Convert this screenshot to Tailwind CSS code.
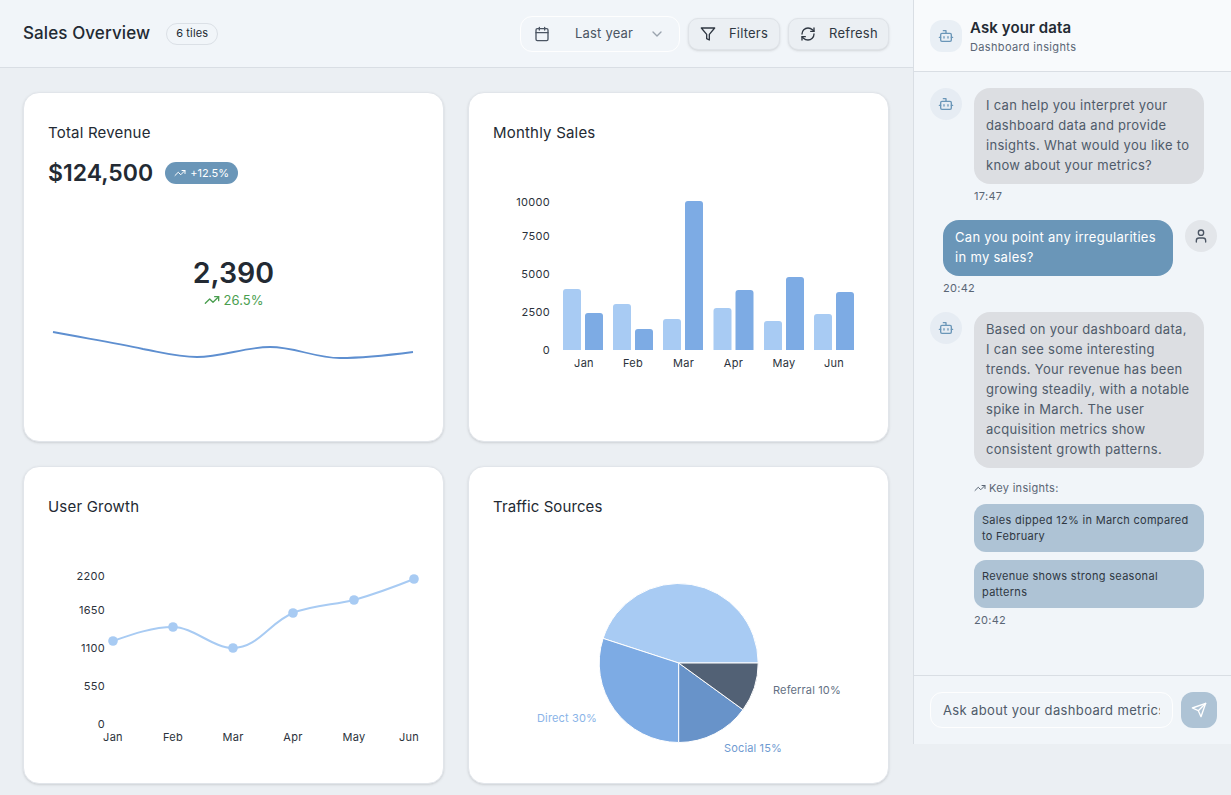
<!DOCTYPE html>
<html lang="en">
<head>
    <meta charset="UTF-8">
    <meta name="viewport" content="width=device-width, initial-scale=1.0">
    <title>Sales Overview</title>
    <script src="https://cdn.jsdelivr.net/npm/@tailwindcss/browser@4"></script>
</head>
<body class="bg-[#ebeff3] font-['Inter',sans-serif] text-[#232a33] overflow-hidden">
    <div class="flex h-[795px] w-[1231px] items-start">
        <!-- Main Content -->
        <div class="w-[913px] shrink-0">
            <div class="h-[68px] bg-[#f1f5f9] border-b border-[#d9dee4] flex items-center pl-[23px] pr-[24px]">
                <h1 class="text-[17px] font-medium tracking-[0.1px]">Sales Overview</h1>
                <span class="ml-4 h-[22px] px-[9px] flex items-center rounded-full border border-[#dbe0e6] text-[11px] tracking-[0.15px]">6 tiles</span>
                <div class="ml-auto flex items-center gap-2">
                    <div class="w-[160px] h-9 rounded-xl border border-white/90 flex items-center pl-[13px] pr-[14px] text-[13px] text-[#4b5563] tracking-[0.2px]">
                        <svg class="w-4 h-4 text-[#4b5563]" viewBox="0 0 24 24" fill="none" stroke="currentColor" stroke-width="2" stroke-linecap="round" stroke-linejoin="round"><path d="M8 2v4M16 2v4"/><rect x="3" y="4" width="18" height="18" rx="2"/><path d="M3 10h18"/></svg>
                        <span class="ml-[25px]">Last year</span>
                        <svg class="ml-auto w-4 h-4 text-[#9aa3ae]" viewBox="0 0 24 24" fill="none" stroke="currentColor" stroke-width="2" stroke-linecap="round" stroke-linejoin="round"><path d="m6 9 6 6 6-6"/></svg>
                    </div>
                    <button class="w-[92px] h-8 rounded-[10px] bg-[#ebeff3] border border-[#dfe3e8] shadow-sm flex items-center pl-[11px] text-[13px] text-[#2f3742] tracking-[0.2px]">
                        <svg class="w-4 h-4" viewBox="0 0 24 24" fill="none" stroke="currentColor" stroke-width="2" stroke-linecap="round" stroke-linejoin="round"><polygon points="22 3 2 3 10 12.46 10 19 14 21 14 12.46 22 3"/></svg>
                        <span class="ml-[13px]">Filters</span>
                    </button>
                    <button class="w-[101px] h-8 rounded-[10px] bg-[#ebeff3] border border-[#dfe3e8] shadow-sm flex items-center pl-[11px] text-[13px] text-[#2f3742] tracking-[0.2px]">
                        <svg class="w-4 h-4" viewBox="0 0 24 24" fill="none" stroke="currentColor" stroke-width="2" stroke-linecap="round" stroke-linejoin="round"><path d="M3 12a9 9 0 0 1 9-9 9.75 9.75 0 0 1 6.74 2.74L21 8"/><path d="M21 3v5h-5"/><path d="M21 12a9 9 0 0 1-9 9 9.75 9.75 0 0 1-6.74-2.74L3 16"/><path d="M8 16H3v5"/></svg>
                        <span class="ml-[13px]">Refresh</span>
                    </button>
                </div>
            </div>

            <div class="grid grid-cols-[421px_421px] gap-6 pl-[23px] pt-6">
                <!-- Total Revenue -->
                <div class="relative h-[350px] bg-white rounded-2xl border border-[#e1e5ea] shadow-sm pl-6 pt-[30px]">
                    <h2 class="text-[15px] leading-5 tracking-[0.2px]">Total Revenue</h2>
                    <div class="flex items-center mt-[15px] h-[30px]">
                        <span class="text-[23px] font-semibold">$124,500</span>
                        <span class="ml-3 h-[22px] px-[9px] rounded-full bg-[#6a96b8] text-white text-[11px] flex items-center gap-1">
                            <svg class="w-3 h-3" viewBox="0 0 24 24" fill="none" stroke="currentColor" stroke-width="2" stroke-linecap="round" stroke-linejoin="round"><polyline points="22 7 13.5 15.5 8.5 10.5 2 17"/><polyline points="16 7 22 7 22 13"/></svg>
                            +12.5%
                        </span>
                    </div>
                    <div class="mt-[69px] flex flex-col items-center pr-6">
                        <div class="text-[28.5px] leading-8 font-semibold">2,390</div>
                        <div class="mt-[1px] flex items-center gap-[4px] text-[13px] leading-5 text-[#4a9e4f]">
                            <svg class="w-4 h-4" viewBox="0 0 24 24" fill="none" stroke="currentColor" stroke-width="2" stroke-linecap="round" stroke-linejoin="round"><polyline points="22 7 13.5 15.5 8.5 10.5 2 17"/><polyline points="16 7 22 7 22 13"/></svg>
                            26.5%
                        </div>
                    </div>
                    <svg class="absolute left-0 top-0" width="419" height="348" viewBox="24 93 419 348" fill="none">
                        <path d="M53 332 C 83 338, 113 342, 143 349 C 160 352, 178 357, 197 357 C 222 357, 245 347, 270 347 C 295 347, 315 358, 340 358 C 365 358, 390 355, 413 352" stroke="#5e8fd0" stroke-width="1.8"/>
                    </svg>
                </div>

                <!-- Monthly Sales -->
                <div class="relative h-[350px] bg-white rounded-2xl border border-[#e1e5ea] shadow-sm pl-6 pt-[30px]">
                    <h2 class="text-[15px] leading-5 tracking-[0.2px]">Monthly Sales</h2>
                    <svg class="absolute left-0 top-0 tracking-[0.3px]" width="419" height="348" viewBox="469 93 419 348" font-size="11" fill="#2b323b">
                        <g text-anchor="end">
                            <text x="550" y="206">10000</text>
                            <text x="550" y="240">7500</text>
                            <text x="550" y="278">5000</text>
                            <text x="550" y="316">2500</text>
                            <text x="550" y="354">0</text>
                        </g>
                        <g fill="#a8cbf3">
                            <path d="M563 350v-58a3 3 0 0 1 3-3h12a3 3 0 0 1 3 3v58z"/>
                            <path d="M613 350v-43a3 3 0 0 1 3-3h12a3 3 0 0 1 3 3v43z"/>
                            <path d="M663 350v-28a3 3 0 0 1 3-3h12a3 3 0 0 1 3 3v28z"/>
                            <path d="M713.5 350v-39a3 3 0 0 1 3-3h12a3 3 0 0 1 3 3v39z"/>
                            <path d="M764 350v-26a3 3 0 0 1 3-3h12a3 3 0 0 1 3 3v26z"/>
                            <path d="M814 350v-33a3 3 0 0 1 3-3h12a3 3 0 0 1 3 3v33z"/>
                        </g>
                        <g fill="#7dabe4">
                            <path d="M585 350v-34a3 3 0 0 1 3-3h12a3 3 0 0 1 3 3v34z"/>
                            <path d="M635 350v-18a3 3 0 0 1 3-3h12a3 3 0 0 1 3 3v18z"/>
                            <path d="M685 350v-146a3 3 0 0 1 3-3h12a3 3 0 0 1 3 3v146z"/>
                            <path d="M735.5 350v-57a3 3 0 0 1 3-3h12a3 3 0 0 1 3 3v57z"/>
                            <path d="M786 350v-70a3 3 0 0 1 3-3h12a3 3 0 0 1 3 3v70z"/>
                            <path d="M836 350v-55a3 3 0 0 1 3-3h12a3 3 0 0 1 3 3v55z"/>
                        </g>
                        <g text-anchor="middle">
                            <text x="584" y="367">Jan</text>
                            <text x="633" y="367">Feb</text>
                            <text x="683.5" y="367">Mar</text>
                            <text x="733.5" y="367">Apr</text>
                            <text x="784" y="367">May</text>
                            <text x="834" y="367">Jun</text>
                        </g>
                    </svg>
                </div>

                <!-- User Growth -->
                <div class="relative h-[318px] bg-white rounded-2xl border border-[#e1e5ea] shadow-sm pl-6 pt-[30px]">
                    <h2 class="text-[15px] leading-5 tracking-[0.2px]">User Growth</h2>
                    <svg class="absolute left-0 top-0 tracking-[0.3px]" width="419" height="316" viewBox="24 467 419 316" font-size="11" fill="#2b323b">
                        <g text-anchor="end">
                            <text x="105" y="580">2200</text>
                            <text x="105" y="614">1650</text>
                            <text x="105" y="652">1100</text>
                            <text x="105" y="690">550</text>
                            <text x="105" y="728">0</text>
                        </g>
                        <path d="M113 641 C 133 634, 153 627, 173 627 C 193 627, 213 648, 233 648 C 258 648, 270 622, 293 613 C 313 605, 334 605, 354 600 C 375 594, 394 587, 414 579" fill="none" stroke="#a8cbf3" stroke-width="2"/>
                        <g fill="#a8cbf3">
                            <circle cx="113" cy="641" r="4.8"/>
                            <circle cx="173" cy="627" r="4.8"/>
                            <circle cx="233" cy="648" r="4.8"/>
                            <circle cx="293" cy="613" r="4.8"/>
                            <circle cx="354" cy="600" r="4.8"/>
                            <circle cx="414" cy="579" r="4.8"/>
                        </g>
                        <g text-anchor="middle">
                            <text x="113" y="741">Jan</text>
                            <text x="173" y="741">Feb</text>
                            <text x="233" y="741">Mar</text>
                            <text x="293" y="741">Apr</text>
                            <text x="354" y="741">May</text>
                            <text x="409" y="741">Jun</text>
                        </g>
                    </svg>
                </div>

                <!-- Traffic Sources -->
                <div class="relative h-[318px] bg-white rounded-2xl border border-[#e1e5ea] shadow-sm pl-6 pt-[30px]">
                    <h2 class="text-[15px] leading-5 tracking-[0.1px]">Traffic Sources</h2>
                    <svg class="absolute left-0 top-0 tracking-[0.15px]" width="419" height="316" viewBox="469 467 419 316" font-size="11">
                        <g stroke="#fff" stroke-width="1">
                            <path d="M678.7 663 L758.2 663 A79.5 79.5 0 0 0 603.1 638.4 Z" fill="#a8cbf3"/>
                            <path d="M678.7 663 L603.1 638.4 A79.5 79.5 0 0 0 678.7 742.5 Z" fill="#7dabe4"/>
                            <path d="M678.7 663 L678.7 742.5 A79.5 79.5 0 0 0 743 709.7 Z" fill="#6893c9"/>
                            <path d="M678.7 663 L743 709.7 A79.5 79.5 0 0 0 758.2 663 Z" fill="#526175"/>
                        </g>
                        <text x="537" y="722" fill="#8ab4e8">Direct 30%</text>
                        <text x="724" y="752" fill="#6f9ad1">Social 15%</text>
                        <text x="773" y="694" fill="#637083">Referral 10%</text>
                    </svg>
                </div>
            </div>
        </div>

        <!-- Chat Sidebar -->
        <div class="w-[318px] h-[744px] shrink-0 border-l border-[#d9dee4] bg-[#f1f5f9] flex flex-col">
            <div class="h-[72px] shrink-0 bg-[#f8fafc] border-b border-[#d9dee4] flex items-center pl-4 gap-2">
                <div class="w-8 h-8 rounded-xl bg-[#e9eff5] flex items-center justify-center text-[#6a96b8]">
                    <svg class="w-4 h-4" viewBox="0 0 24 24" fill="none" stroke="currentColor" stroke-width="2" stroke-linecap="round" stroke-linejoin="round"><path d="M12 8V4H8"/><rect x="4" y="8" width="16" height="12" rx="2"/><path d="M2 14h2M20 14h2M15 13v2M9 13v2"/></svg>
                </div>
                <div class="pt-[1px]">
                    <div class="text-[15px] leading-5 font-semibold tracking-[0.1px]">Ask your data</div>
                    <div class="text-[11px] leading-4 mt-[1px] text-[#5a6675] tracking-[0.35px]">Dashboard insights</div>
                </div>
            </div>

            <div class="flex-1 pt-4 pl-4 flex flex-col text-[13px] leading-5 tracking-[0.3px]">
                <!-- bot message -->
                <div class="flex gap-3">
                    <div class="w-8 h-8 rounded-full bg-[#e6ecf3] flex items-center justify-center text-[#6a96b8] shrink-0">
                        <svg class="w-4 h-4" viewBox="0 0 24 24" fill="none" stroke="currentColor" stroke-width="2" stroke-linecap="round" stroke-linejoin="round"><path d="M12 8V4H8"/><rect x="4" y="8" width="16" height="12" rx="2"/><path d="M2 14h2M20 14h2M15 13v2M9 13v2"/></svg>
                    </div>
                    <div class="w-[230px]">
                        <div class="rounded-2xl bg-[#dcdee2] px-3 pt-[7px] pb-[9px] text-[#4f5b6a]">I can help you interpret your dashboard data and provide insights. What would you like to know about your metrics?</div>
                        <div class="mt-1 text-[11px] leading-4 text-[#5a6675]">17:47</div>
                    </div>
                </div>
                <!-- user message -->
                <div class="flex gap-3 mt-4 pl-[13px]">
                    <div class="w-[230px]">
                        <div class="rounded-2xl bg-[#6a96b8] px-3 pt-[7px] pb-[9px] text-white">Can you point any irregularities in my sales?</div>
                        <div class="mt-1 text-[11px] leading-4 text-[#5a6675]">20:42</div>
                    </div>
                    <div class="w-8 h-8 rounded-full bg-[#e3e6ea] flex items-center justify-center text-[#4b5563] shrink-0">
                        <svg class="w-4 h-4" viewBox="0 0 24 24" fill="none" stroke="currentColor" stroke-width="2" stroke-linecap="round" stroke-linejoin="round"><path d="M19 21v-2a4 4 0 0 0-4-4H9a4 4 0 0 0-4 4v2"/><circle cx="12" cy="7" r="4"/></svg>
                    </div>
                </div>
                <!-- bot message -->
                <div class="flex gap-3 mt-4">
                    <div class="w-8 h-8 rounded-full bg-[#e6ecf3] flex items-center justify-center text-[#6a96b8] shrink-0">
                        <svg class="w-4 h-4" viewBox="0 0 24 24" fill="none" stroke="currentColor" stroke-width="2" stroke-linecap="round" stroke-linejoin="round"><path d="M12 8V4H8"/><rect x="4" y="8" width="16" height="12" rx="2"/><path d="M2 14h2M20 14h2M15 13v2M9 13v2"/></svg>
                    </div>
                    <div class="w-[230px]">
                        <div class="rounded-2xl bg-[#dcdee2] px-3 pt-[7px] pb-[9px] text-[#4f5b6a]">Based on your dashboard data,<br>I can see some interesting trends. Your revenue has been growing steadily, with a notable spike in March. The user acquisition metrics show consistent growth patterns.</div>
                        <div class="mt-3 flex items-center gap-[3px] text-[11px] leading-4 text-[#5a6675]">
                            <svg class="w-3 h-3" viewBox="0 0 24 24" fill="none" stroke="currentColor" stroke-width="2" stroke-linecap="round" stroke-linejoin="round"><polyline points="22 7 13.5 15.5 8.5 10.5 2 17"/><polyline points="16 7 22 7 22 13"/></svg>
                            Key insights:
                        </div>
                        <div class="mt-2 rounded-xl bg-[#aec3d5] px-2 py-2 text-[11px] leading-4 text-[#2f3742]">Sales dipped 12% in March compared to February</div>
                        <div class="mt-2 rounded-xl bg-[#aec3d5] px-2 py-2 text-[11px] leading-4 text-[#2f3742]">Revenue shows strong seasonal patterns</div>
                        <div class="mt-1 text-[11px] leading-4 text-[#5a6675]">20:42</div>
                    </div>
                </div>
            </div>

            <div class="h-[69px] shrink-0 border-t border-[#d9dee4] pt-4 pl-4 flex gap-2">
                <input type="text" placeholder="Ask about your dashboard metrics..." class="w-[243px] h-9 rounded-xl border border-white/90 px-3 text-[13px] tracking-[0.35px] outline-none placeholder:text-[#4f5b6a]">
                <button class="w-9 h-9 rounded-xl bg-[#aec3d5] flex items-center justify-center text-white">
                    <svg class="w-4 h-4" viewBox="0 0 24 24" fill="none" stroke="currentColor" stroke-width="2" stroke-linecap="round" stroke-linejoin="round"><path d="m22 2-7 20-4-9-9-4Z"/><path d="M22 2 11 13"/></svg>
                </button>
            </div>
        </div>
    </div>
</body>
</html>
